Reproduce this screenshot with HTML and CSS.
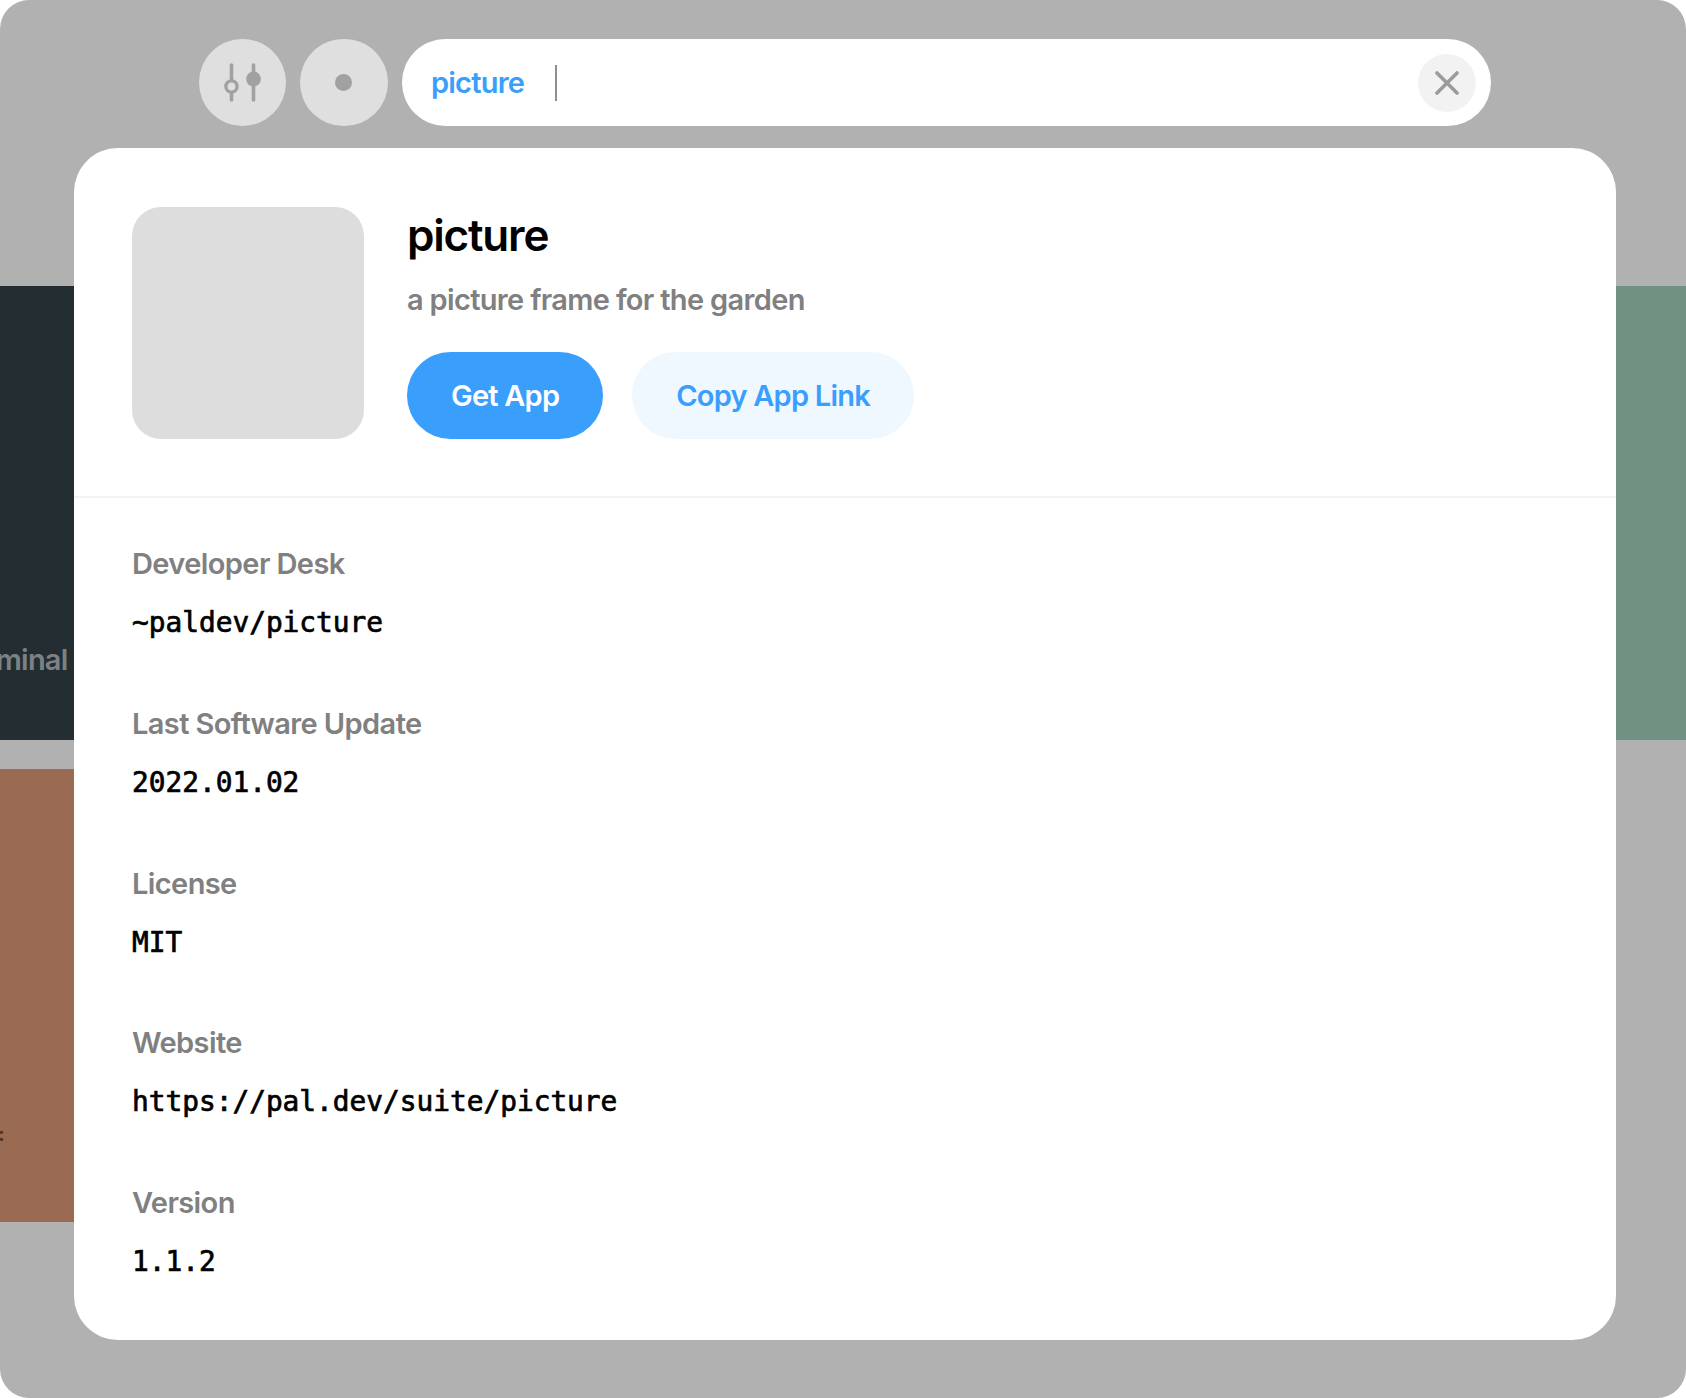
FILE: index.html
```html
<!DOCTYPE html>
<html lang="en">
<head>
<meta charset="utf-8">
<title>picture</title>
<link rel="stylesheet" href="styles.css">
</head>
<body>
<div class="desk">
  <div class="tiles">
    <div class="tile tile-dark"><span class="tile-name">Terminal</span></div>
    <div class="tile-gap"></div>
    <div class="tile tile-green"></div>
    <div class="tile tile-brown"><span class="tile-note">:</span></div>
  </div>
  <header class="bar">
    <button class="round" aria-label="Filters">
      <svg width="87" height="87" viewBox="0 0 87 87" fill="none">
        <path d="M32.5 26v35M54.5 26v35" stroke="#a1a1a1" stroke-width="3.6" stroke-linecap="round"/>
        <circle cx="32.5" cy="47.5" r="5.6" fill="#dfdfdf" stroke="#a1a1a1" stroke-width="3.4"/>
        <circle cx="54.5" cy="40" r="7.4" fill="#a1a1a1"/>
      </svg>
    </button>
    <button class="round" aria-label="Notifications"><span class="dot"></span></button>
    <div class="search">
      <span class="query">picture</span>
      <span class="caret"></span>
      <button class="clear" aria-label="Clear">
        <svg width="24" height="24" viewBox="0 0 24 24" fill="none">
          <path d="M2 2l20 20M22 2L2 22" stroke="#9b9b9b" stroke-width="3.6" stroke-linecap="round"/>
        </svg>
      </button>
    </div>
  </header>
  <main class="modal">
    <section class="head">
      <div class="app-icon"></div>
      <div class="app-info">
        <h1 class="app-name">picture</h1>
        <p class="app-desc">a picture frame for the garden</p>
        <div class="actions">
          <button class="btn btn-primary">Get App</button>
          <button class="btn btn-soft">Copy App Link</button>
        </div>
      </div>
    </section>
    <section class="details">
      <div class="item"><div class="label">Developer Desk</div><div class="value">~paldev/picture</div></div>
      <div class="item"><div class="label">Last Software Update</div><div class="value">2022.01.02</div></div>
      <div class="item"><div class="label">License</div><div class="value">MIT</div></div>
      <div class="item"><div class="label">Website</div><div class="value">https://pal.dev/suite/picture</div></div>
      <div class="item"><div class="label">Version</div><div class="value">1.1.2</div></div>
    </section>
  </main>
</div>
</body>
</html>
```
FILE: styles.css
```css
* { box-sizing: border-box; }
html, body { margin: 0; height: 100%; background: #fff; }
body { font-family: Inter, "Liberation Sans", sans-serif; overflow: hidden; }
button { border: 0; padding: 0; font: inherit; cursor: pointer; }

.desk {
  position: relative;
  width: 1686px;
  height: 1398px;
  background: #b1b1b1;
  border-radius: 29px;
  overflow: hidden;
}

.tiles {
  display: grid;
  grid-template-columns: 73.5px 1fr 70px;
  grid-template-rows: 454px 453px;
  row-gap: 29px;
  padding-top: 286px;
}
.tile { display: flex; overflow: hidden; }
.tile-dark {
  background: #232d32;
  justify-content: flex-end;
  align-items: flex-start;
  padding-right: 6px;
  padding-top: 357px;
}
.tile-green { background: #719182; }
.tile-brown {
  background: #9a6b52;
  grid-column: 1;
  align-items: flex-end;
  padding-bottom: 76px;
}
.tile-name {
  color: #7c8284;
  font-size: 29px;
  line-height: 34px;
  font-weight: 600;
  letter-spacing: -0.8px;
  white-space: nowrap;
}
.tile-note { color: #4a3328; font-size: 20px; font-weight: 700; margin-left: -2px; }

.bar {
  position: absolute;
  top: 39.2px;
  left: 198.7px;
  width: 1292.6px;
  height: 87.3px;
  display: flex;
  gap: 14.3px;
}
.round {
  width: 87.3px;
  height: 87.3px;
  flex: none;
  border-radius: 50%;
  background: #dfdfdf;
  display: flex;
  align-items: center;
  justify-content: center;
}
.dot { width: 17px; height: 17px; border-radius: 50%; background: #a1a1a1; }
.search {
  flex: 1;
  display: flex;
  align-items: center;
  background: #fff;
  border-radius: 44px;
  padding: 0 15px 0 29px;
}
.query { color: #3a9efd; font-size: 29px; font-weight: 600; letter-spacing: -0.75px; }
.caret { width: 2px; height: 36px; background: #8f8f8f; margin-left: 31px; }
.clear {
  margin-left: auto;
  width: 58px;
  height: 58px;
  border-radius: 50%;
  background: #f2f2f2;
  display: flex;
  align-items: center;
  justify-content: center;
}

.modal {
  position: absolute;
  top: 148.4px;
  left: 73.5px;
  width: 1542.5px;
  height: 1192px;
  background: #fff;
  border-radius: 44px;
}
.head {
  display: flex;
  gap: 43px;
  padding: 58.6px 58px 57.4px 58.5px;
  border-bottom: 2px solid #f3f3f3;
}
.app-icon { width: 232px; height: 232px; border-radius: 29px; background: #dddddd; flex: none; }
.app-info { display: flex; flex-direction: column; }
.app-name {
  margin: 5.4px 0 0;
  font-size: 44px;
  line-height: 46px;
  font-weight: 600;
  letter-spacing: -1.2px;
  color: #000;
}
.app-desc {
  margin: 24px 0 0;
  font-size: 29px;
  line-height: 36px;
  font-weight: 600;
  letter-spacing: -0.67px;
  color: #808080;
}
.actions { display: flex; gap: 29px; margin-top: auto; }
.btn {
  height: 87px;
  padding: 0 44px;
  border-radius: 44px;
  font-size: 29px;
  font-weight: 600;
  letter-spacing: -0.78px;
}
.btn-primary { background: #3a9efd; color: #fff; }
.btn-soft { background: #eff7ff; color: #3a9efd; }

.details {
  display: flex;
  flex-direction: column;
  gap: 44px;
  padding: 48px 58.5px 0;
}
.item { display: flex; flex-direction: column; gap: 23px; height: 115.7px; }
.label {
  font-size: 29px;
  line-height: 36px;
  font-weight: 600;
  letter-spacing: -0.6px;
  color: #808080;
}
.value {
  font-family: "DejaVu Sans Mono", "Liberation Mono", monospace;
  font-size: 27.8px;
  line-height: 36px;
  font-weight: 400;
  color: #000;
  -webkit-text-stroke: 0.7px #000;
}
```
